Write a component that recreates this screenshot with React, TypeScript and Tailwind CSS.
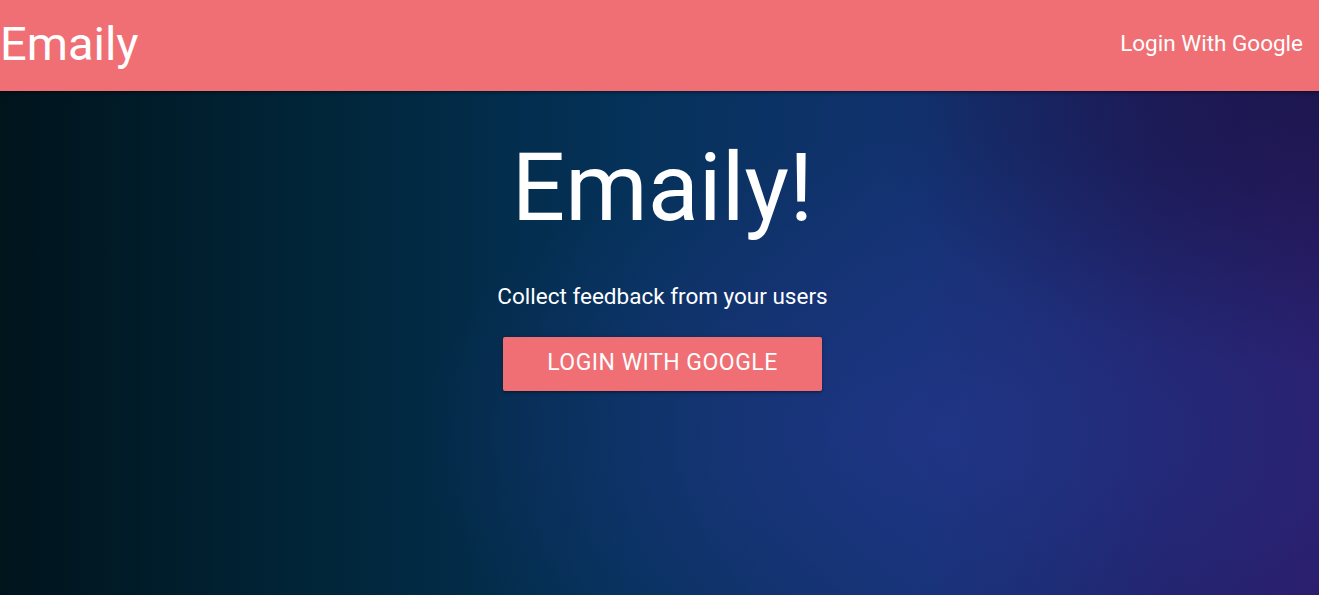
import React from "react";

export default function App() {
  return (
    <div className="w-[1319px] h-[595px] overflow-hidden flex flex-col font-['Roboto',sans-serif] text-white">
      <nav className="relative z-10 h-[91px] shrink-0 bg-[#ef6f74] flex items-center justify-between shadow-[0_2px_2px_0_rgba(0,0,0,0.14),0_3px_1px_-2px_rgba(0,0,0,0.12),0_1px_5px_0_rgba(0,0,0,0.2)]">
        <a className="text-[47px] leading-none -mt-[4px] pl-0">Emaily</a>
        <a className="text-[22.5px] leading-none pr-[16px] -mt-[4px]">Login With Google</a>
      </nav>
      <main
        className="flex-1 flex flex-col items-center pl-[6px] bg-[radial-gradient(ellipse_35%_55%_at_100%_0%,rgba(12,16,45,0.45)_0%,rgba(12,16,45,0)_100%),radial-gradient(ellipse_40%_60%_at_72%_68%,rgba(36,54,140,0.75)_0%,rgba(36,54,140,0)_100%),linear-gradient(to_right,#00141c_0%,#01263a_25%,#05325a_48%,#123270_70%,#231f68_88%,#2c1c6b_100%)]"
      >
        <h1 className="text-[94px] leading-none font-normal mt-[50px]">Emaily!</h1>
        <p className="text-[22.5px] leading-none mt-[50px]">Collect feedback from your users</p>
        <button className="mt-[29px] w-[319px] h-[54px] rounded-[2px] bg-[#ef6f74] text-[23px] tracking-[0.5px] uppercase shadow-[0_2px_2px_0_rgba(0,0,0,0.14),0_3px_1px_-2px_rgba(0,0,0,0.12),0_1px_5px_0_rgba(0,0,0,0.2)]">
          Login With Google
        </button>
      </main>
    </div>
  );
}
